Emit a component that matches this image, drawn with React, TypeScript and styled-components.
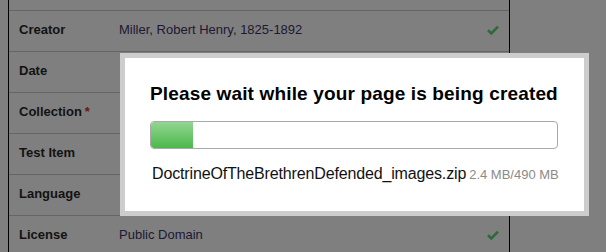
import React from "react";
import styled, { createGlobalStyle } from "styled-components";

const GlobalStyle = createGlobalStyle`
  html, body {
    margin: 0;
    padding: 0;
    background: #7f7f7f;
    font-family: "Liberation Sans", Arial, sans-serif;
    overflow: hidden;
  }
`;

const Page = styled.div`
  position: relative;
  width: 606px;
  height: 252px;
  overflow: hidden;
  padding-left: 8px;
  box-sizing: border-box;
`;

const Table = styled.div`
  width: 502px;
  margin-top: -30px;
  border-left: 1px solid #000;
  border-right: 1px solid #000;
  box-sizing: border-box;
`;

const Row = styled.div`
  display: grid;
  grid-template-columns: 110px 1fr 22px;
  align-items: center;
  height: 41px;
  padding-bottom: 3px;
  box-sizing: border-box;
  border-bottom: 1px solid #656565;
`;

const Label = styled.div`
  padding-left: 10px;
  font-size: 13px;
  font-weight: bold;
  color: #121212;
`;

const Required = styled.span`
  color: #6a1616;
  margin-left: 3px;
`;

const Value = styled.div`
  font-size: 13px;
  color: #1d1733;
`;

const Check = styled.div`
  display: flex;
  align-items: center;
  color: #2c6a3c;
`;

const Modal = styled.div`
  position: absolute;
  left: 120px;
  top: 53px;
  width: 469px;
  height: 163px;
  box-sizing: border-box;
  border: 5px solid #cdcdcd;
  background: #fff;
  padding: 25px 26px 0 25px;
  display: flex;
  flex-direction: column;
`;

const Title = styled.h2`
  margin: 0;
  font-size: 19px;
  letter-spacing: 0.15px;
  font-weight: bold;
  color: #000;
  line-height: 22px;
  white-space: nowrap;
`;

const Bar = styled.div`
  margin-top: 16px;
  height: 28px;
  box-sizing: border-box;
  border: 1px solid #a9a9a9;
  border-radius: 4px;
  overflow: hidden;
  background: #fff;
`;

const Fill = styled.div`
  height: 100%;
  background: linear-gradient(#93d593, #4ab94a);
  border-radius: 3px 0 0 3px;
`;

const FileLine = styled.div`
  margin-top: 16px;
  display: flex;
  align-items: baseline;
  padding-left: 2px;
  white-space: nowrap;
`;

const FileName = styled.span`
  font-size: 16px;
  letter-spacing: -0.15px;
  color: #111;
`;

const Size = styled.span`
  flex-shrink: 0;
  font-size: 13px;
  color: #8a8a8a;
  margin-left: 3px;
`;

const CheckIcon = () => (
  <svg width="12" height="10" viewBox="0 0 12 10">
    <path d="M1 5.2 L4.3 8.4 L11 1.6" fill="none" stroke="currentColor" strokeWidth="2.6" strokeLinejoin="miter" />
  </svg>
);

const rows: { id: string; label: string; value?: string; required?: boolean; check?: boolean }[] = [
  { id: "prev", label: "" },
  { id: "creator", label: "Creator", value: "Miller, Robert Henry, 1825-1892", check: true },
  { id: "date", label: "Date" },
  { id: "collection", label: "Collection", required: true },
  { id: "test", label: "Test Item" },
  { id: "language", label: "Language" },
  { id: "license", label: "License", value: "Public Domain", check: true },
];

export default function App() {
  const progress = 42 / 406;
  return (
    <>
      <GlobalStyle />
      <Page>
        <Table>
          {rows.map((r) => (
            <Row key={r.id}>
              <Label>
                {r.label}
                {r.required && <Required>*</Required>}
              </Label>
              <Value>{r.value}</Value>
              <Check>{r.check && <CheckIcon />}</Check>
            </Row>
          ))}
        </Table>
        <Modal>
          <Title>Please wait while your page is being created</Title>
          <Bar>
            <Fill style={{ width: `${progress * 100}%` }} />
          </Bar>
          <FileLine>
            <FileName>DoctrineOfTheBrethrenDefended_images.zip</FileName>
            <Size>2.4 MB/490 MB</Size>
          </FileLine>
        </Modal>
      </Page>
    </>
  );
}
